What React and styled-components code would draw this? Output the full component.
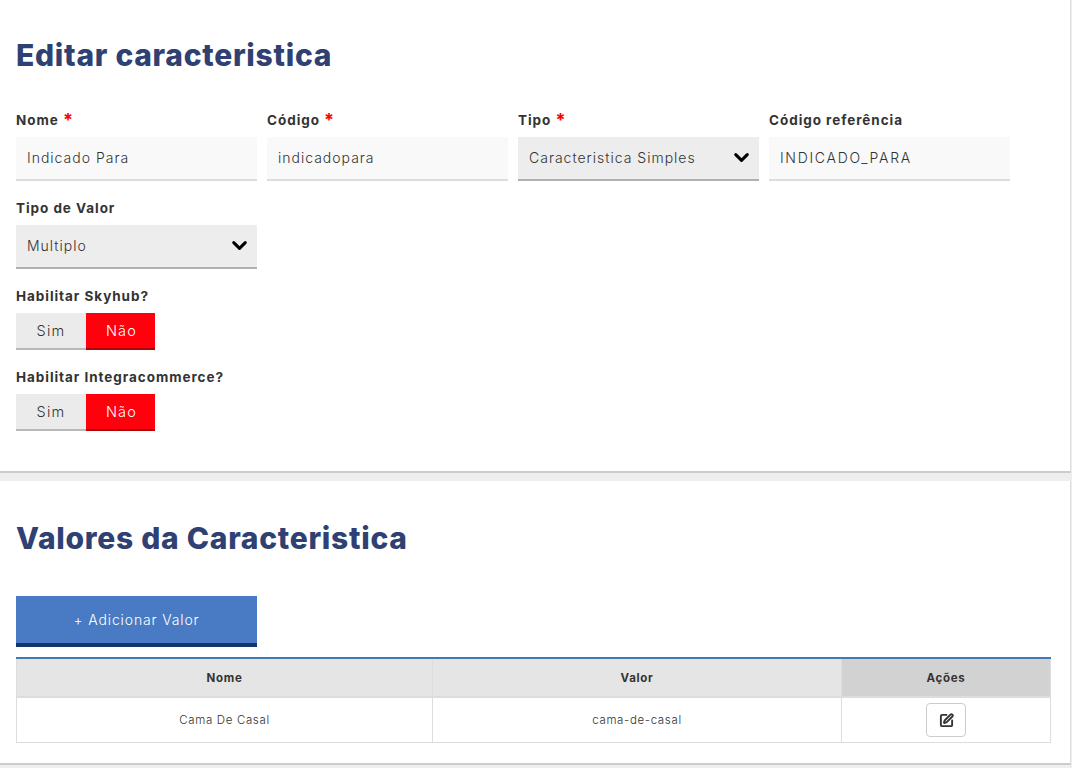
import React from 'react';
import styled, { createGlobalStyle } from 'styled-components';
import { ChevronDown, SquarePen } from 'lucide-react';

const colors = {
  title: '#2f4172',
  text: '#333333',
  inputBg: '#f9f9f9',
  selectBg: '#ededed',
  red: '#ff000c',
  blue: '#487bc3',
  blueDark: '#12366b',
};

const GlobalStyle = createGlobalStyle`
  html, body {
    margin: 0;
    background: #eeeeee;
    font-family: "Inter", "Noto Sans", sans-serif;
    color: ${colors.text};
  }
  * { box-sizing: border-box; }
`;

const Page = styled.div`
  width: 1071px;
  display: flex;
  flex-direction: column;
  gap: 8px;
`;

const Panel = styled.section`
  background: #ffffff;
  border-bottom: 2px solid #cccccc;
  border-right: 1px solid #dddddd;
  padding: ${(p) => p.$padding};
`;

const Title = styled.h1`
  margin: 0;
  font-size: 30px;
  line-height: 36px;
  font-weight: 800;
  color: ${colors.title};
  letter-spacing: 0.72px;
`;

const Row = styled.div`
  display: flex;
  gap: 10px;
  margin-top: ${(p) => p.$top}px;
`;

const Field = styled.div`
  width: 241px;
`;

const Label = styled.label`
  display: block;
  font-size: 13.5px;
  line-height: 18px;
  font-weight: 700;
  letter-spacing: 0.95px;
  margin-bottom: 8px;
`;

const Required = styled.span`
  color: #ff0000;
  font-size: 18px;
  line-height: 10px;
  vertical-align: -1px;
`;

const Input = styled.div`
  height: 44px;
  display: flex;
  align-items: center;
  padding: 0 11px 1px;
  font-size: 14px;
  font-weight: 300;
  letter-spacing: ${(p) => p.$spacing || 1}px;
  background: ${colors.inputBg};
  border-bottom: 2px solid #dddddd;
`;

const Select = styled(Input)`
  justify-content: space-between;
  padding: 0 6px 1px 11px;
  background: ${colors.selectBg};
  border-bottom-color: #b0b0b0;
  svg { color: #000000; }
`;

const Toggle = styled.div`
  display: flex;
  width: 139px;
`;

const ToggleOption = styled.div`
  height: 37px;
  flex: ${(p) => (p.$active ? '0 0 69px' : '0 0 70px')};
  display: flex;
  align-items: center;
  justify-content: center;
  font-size: 14.5px;
  font-weight: 300;
  letter-spacing: 1.2px;
  padding-left: ${(p) => (p.$active ? 2 : 0)}px;
  background: ${(p) => (p.$active ? colors.red : '#ebebeb')};
  color: ${(p) => (p.$active ? '#ffffff' : colors.text)};
  border-bottom: 2px solid ${(p) => (p.$active ? '#b00008' : '#b8b8b8')};
`;

const AddButton = styled.button`
  display: block;
  width: 241px;
  height: 51px;
  margin-top: 40px;
  padding: 0;
  border: 0;
  border-bottom: 4px solid ${colors.blueDark};
  background: ${colors.blue};
  color: #ffffff;
  font-family: inherit;
  font-size: 14px;
  font-weight: 300;
  letter-spacing: 0.85px;
`;

const Table = styled.table`
  width: 1035px;
  margin-top: 10px;
  border-collapse: separate;
  border-spacing: 0;
  table-layout: fixed;
  border-top: 2px solid #3f79b8;
  font-size: 11.5px;
`;

const Th = styled.th`
  height: 39px;
  padding: 0;
  width: ${(p) => p.$width}px;
  font-size: 11.5px;
  font-weight: 700;
  letter-spacing: 0.7px;
  background: ${(p) => (p.$dark ? '#d2d2d2' : '#e5e5e5')};
  border-right: 1px solid #dddddd;
  border-bottom: 2px solid #dddddd;
  &:first-child { border-left: 1px solid #dddddd; }
`;

const Td = styled.td`
  height: 45px;
  padding: 0;
  text-align: center;
  font-weight: 300;
  letter-spacing: 0.65px;
  border-right: 1px solid #dddddd;
  border-bottom: 1px solid #dddddd;
  &:first-child { border-left: 1px solid #dddddd; }
`;

const IconButton = styled.button`
  display: inline-flex;
  align-items: center;
  justify-content: center;
  vertical-align: middle;
  width: 40px;
  height: 34px;
  padding: 0;
  border: 1px solid #cccccc;
  border-radius: 4px;
  background: #ffffff;
  color: ${colors.text};
`;

const SwitchField = ({ label }) => (
  <Row $top={18}>
    <div>
      <Label>{label}</Label>
      <Toggle>
        <ToggleOption>Sim</ToggleOption>
        <ToggleOption $active>Não</ToggleOption>
      </Toggle>
    </div>
  </Row>
);

const App = () => {
  return (
    <Page>
      <GlobalStyle />
      <Panel $padding="37px 16px 40px">
        <Title>Editar caracteristica</Title>
        <Row $top={38}>
          <Field>
            <Label>Nome <Required>*</Required></Label>
            <Input>Indicado Para</Input>
          </Field>
          <Field>
            <Label>Código <Required>*</Required></Label>
            <Input>indicadopara</Input>
          </Field>
          <Field>
            <Label>Tipo <Required>*</Required></Label>
            <Select>Caracteristica Simples <ChevronDown size={23} strokeWidth={3.2} /></Select>
          </Field>
          <Field>
            <Label>Código referência</Label>
            <Input $spacing={1.7}>INDICADO_PARA</Input>
          </Field>
        </Row>
        <Row $top={18}>
          <Field>
            <Label>Tipo de Valor</Label>
            <Select>Multiplo <ChevronDown size={23} strokeWidth={3.2} /></Select>
          </Field>
        </Row>
        <SwitchField label="Habilitar Skyhub?" />
        <SwitchField label="Habilitar Integracommerce?" />
      </Panel>
      <Panel $padding="39px 16px 20px">
        <Title>Valores da Caracteristica</Title>
        <AddButton>+ Adicionar Valor</AddButton>
        <Table>
          <thead>
            <tr>
              <Th $width={417}>Nome</Th>
              <Th $width={409}>Valor</Th>
              <Th $dark>Ações</Th>
            </tr>
          </thead>
          <tbody>
            <tr>
              <Td>Cama De Casal</Td>
              <Td>cama-de-casal</Td>
              <Td>
                <IconButton><SquarePen size={15} strokeWidth={3} /></IconButton>
              </Td>
            </tr>
          </tbody>
        </Table>
      </Panel>
    </Page>
  );
};

export default App;
